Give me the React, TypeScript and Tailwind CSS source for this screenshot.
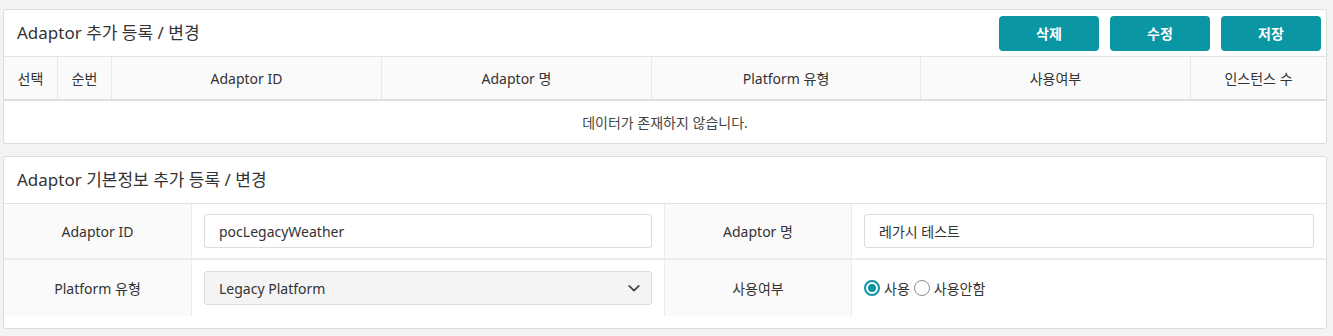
import React from "react";

const font = { fontFamily: '"Noto Sans", "Noto Sans CJK KR", sans-serif' };

function Btn({ children }: { children: React.ReactNode }) {
  return (
    <button className="w-[100px] h-[35px] rounded-[4px] bg-[#0a96a3] text-white text-[14px] font-bold flex items-center justify-center">
      {children}
    </button>
  );
}

export default function App() {
  const cols = [
    { label: "선택", w: "w-[54px]" },
    { label: "순번", w: "w-[54px]" },
    { label: "Adaptor ID", w: "w-[270px]" },
    { label: "Adaptor 명", w: "w-[270px]" },
    { label: "Platform 유형", w: "w-[269px]" },
    { label: "사용여부", w: "w-[270px]" },
    { label: "인스턴스 수", w: "" },
  ];
  return (
    <div className="min-h-[336px] bg-[#f3f3f3] pt-[9px] pl-[3px] text-[#333]" style={font}>
      <div className="w-[1324px] bg-white border border-[#dcdcdc] rounded-[3px]">
        <div className="flex items-center justify-between h-[47px] pl-[13px] pr-[5px] border-b border-[#e3e3e3]">
          <div className="text-[17px] text-[#333]">Adaptor 추가 등록 / 변경</div>
          <div className="flex gap-[11px]">
            <Btn>삭제</Btn>
            <Btn>수정</Btn>
            <Btn>저장</Btn>
          </div>
        </div>
        <div className="flex h-[44px] bg-[#fafafa] border-b-2 border-[#dedede] text-[14px]">
          {cols.map((c, i) => (
            <div
              key={i}
              className={`${c.w} ${c.w ? "" : "flex-1"} flex items-center justify-center ${i < cols.length - 1 ? "border-r border-[#e8e8e8]" : ""}`}
            >
              {c.label}
            </div>
          ))}
        </div>
        <div className="h-[42px] flex items-center justify-center text-[14px] text-[#444]">
          데이터가 존재하지 않습니다.
        </div>
      </div>

      <div className="mt-[12px] w-[1324px] bg-white border border-[#dcdcdc] rounded-[3px] pb-[12px]">
        <div className="flex items-center h-[47px] pl-[13px] border-b border-[#e3e3e3]">
          <div className="text-[17px] text-[#333]">Adaptor 기본정보 추가 등록 / 변경</div>
        </div>
        <div className="flex h-[56px] border-b-2 border-[#ececec] text-[14px]">
          <div className="w-[188px] bg-[#fafafa] border-r border-[#ececec] flex items-center justify-center">Adaptor ID</div>
          <div className="w-[472px] px-[12px] flex items-center">
            <div className="w-full h-[34px] border border-[#dcdcdc] rounded-[3px] flex items-center px-[14px]">pocLegacyWeather</div>
          </div>
          <div className="w-[188px] bg-[#fafafa] border-x border-[#ececec] flex items-center justify-center">Adaptor 명</div>
          <div className="flex-1 px-[12px] flex items-center">
            <div className="w-full h-[34px] border border-[#dcdcdc] rounded-[3px] flex items-center px-[14px]">레가시 테스트</div>
          </div>
        </div>
        <div className="flex h-[56px] text-[14px]">
          <div className="w-[188px] bg-[#fafafa] border-r border-[#ececec] flex items-center justify-center">Platform 유형</div>
          <div className="w-[472px] px-[12px] flex items-center">
            <div className="w-full h-[34px] border border-[#dcdcdc] rounded-[3px] bg-[#f4f4f4] flex items-center justify-between pl-[14px] pr-[10px]">
              <span>Legacy Platform</span>
              <svg width="14" height="14" viewBox="0 0 16 16" fill="none">
                <path d="M2.5 5.5L8 11l5.5-5.5" stroke="#444" strokeWidth="2" strokeLinecap="round" strokeLinejoin="round" />
              </svg>
            </div>
          </div>
          <div className="w-[188px] bg-[#fafafa] border-x border-[#ececec] flex items-center justify-center">사용여부</div>
          <div className="flex-1 px-[12px] flex items-center gap-[4px]">
            <span className="w-[16px] h-[16px] rounded-full border-2 border-[#0a96a3] flex items-center justify-center">
              <span className="w-[8px] h-[8px] rounded-full bg-[#0a96a3]" />
            </span>
            <span>사용</span>
            <span className="w-[16px] h-[16px] rounded-full border border-[#8a8f96]" />
            <span>사용안함</span>
          </div>
        </div>
      </div>
    </div>
  );
}
